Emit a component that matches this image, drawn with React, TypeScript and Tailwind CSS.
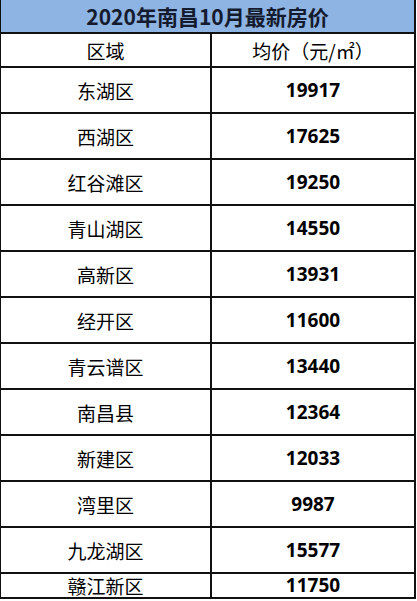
import React from "react";

const rows: [string, string][] = [
  ["东湖区", "19917"],
  ["西湖区", "17625"],
  ["红谷滩区", "19250"],
  ["青山湖区", "14550"],
  ["高新区", "13931"],
  ["经开区", "11600"],
  ["青云谱区", "13440"],
  ["南昌县", "12364"],
  ["新建区", "12033"],
  ["湾里区", "9987"],
  ["九龙湖区", "15577"],
  ["赣江新区", "11750"],
];

export default function App() {
  return (
    <div className="w-[417px] h-[601px] bg-white overflow-hidden font-['Noto_Sans_CJK_SC','Noto_Sans',sans-serif]">
      <div className="w-[416px] border-l border-r-2 border-[#111]">
        <div className="h-[34px] border-b-2 border-[#111] bg-[#8db4e3] flex items-center justify-center text-[21px] font-bold text-[#151b2e] leading-none">
          2020年南昌10月最新房价
        </div>
        <div className="grid grid-cols-[211px_1fr] h-[34px] border-b-2 border-[#111]">
          <div className="border-r-2 border-[#111] flex items-center justify-center text-[19px] text-black leading-none">
            区域
          </div>
          <div className="flex items-center justify-center text-[19px] text-black leading-none">
            均价（元/㎡）
          </div>
        </div>
        {rows.map(([name, price], i) => (
          <div
            key={name}
            className={
              i === rows.length - 1
                ? "grid grid-cols-[211px_1fr] h-[25px] border-b-2 border-[#111]"
                : "grid grid-cols-[211px_1fr] h-[46px] border-b-2 border-[#111]"
            }
          >
            <div className="border-r-2 border-[#111] flex items-center justify-center text-[19px] text-black leading-none">
              {name}
            </div>
            <div className="flex items-center justify-center text-[19px] font-bold text-black leading-none font-['Open_Sans','Noto_Sans',sans-serif]">
              {price}
            </div>
          </div>
        ))}
      </div>
    </div>
  );
}
